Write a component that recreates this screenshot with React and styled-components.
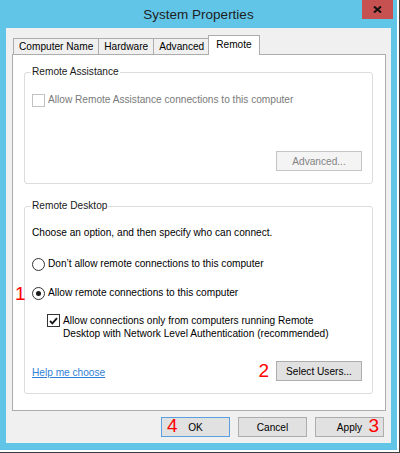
import React from 'react';
import styled, { createGlobalStyle, css } from 'styled-components';

const GlobalStyle = createGlobalStyle`
  html, body {
    margin: 0;
    padding: 0;
    background: #ffffff;
  }
  body {
    font-family: "Liberation Sans", Arial, sans-serif;
    font-size: 10.15px;
    color: #000;
  }
`;

const Desktop = styled.div`
  width: 400px;
  height: 453px;
  box-sizing: border-box;
  border-right: 1px solid #3c3c3c;
  border-bottom: 1px solid #3c3c3c;
  overflow: hidden;
`;

const Window = styled.div`
  width: 397px;
  height: 450px;
  box-sizing: border-box;
  background: #61c5e8;
  padding: 0 6px 7px 6px;
  display: flex;
  flex-direction: column;
`;

const TitleBar = styled.div`
  position: relative;
  height: 28px;
  flex: 0 0 28px;
  display: flex;
  align-items: center;
  justify-content: center;
`;

const Title = styled.span`
  font-size: 13.5px;
  color: #1e1e1e;
`;

const CloseButton = styled.div`
  position: absolute;
  top: 0;
  right: -2px;
  width: 31px;
  height: 19px;
  background: #c75050;
  display: flex;
  align-items: center;
  justify-content: center;
`;

const Client = styled.div`
  flex: 1;
  background: #f0f0f0;
  padding: 7px 5px 0 6px;
  display: flex;
  flex-direction: column;
`;

const TabStrip = styled.div`
  display: flex;
  align-items: flex-end;
  height: 20px;
  margin: 0 0 -1px 1px;
  position: relative;
  z-index: 1;
`;

const Tab = styled.div`
  box-sizing: border-box;
  height: 16px;
  margin: 0 0 1px -1px;
  padding: 0 5px;
  border: 1px solid #adadad;
  border-bottom: none;
  background: #f0f0f0;
  display: flex;
  align-items: center;
  white-space: nowrap;
  &:first-child {
    margin-left: 0;
  }
  ${(p) =>
    p.$active &&
    css`
      height: 20px;
      margin: 0 0 0 -2px;
      padding: 0 7px 2px;
      background: #ffffff;
    `}
`;

const Panel = styled.div`
  flex: 1;
  background: #ffffff;
  border: 1px solid #adadad;
  padding: 11px 12px 0 11px;
  display: flex;
  flex-direction: column;
`;

const Group = styled.fieldset`
  margin: ${(p) => (p.$first ? '0' : '16px 0 0')};
  padding: 0 10px 12px 7px;
  border: 1px solid #dcdcdc;
  border-radius: 3px;
  min-width: 0;
`;

const Legend = styled.legend`
  padding: 0 1px;
  margin-left: -1px;
  line-height: 12px;
  color: #1a1a1a;
`;

const GroupBody = styled.div`
  display: flex;
  flex-direction: column;
  padding-top: 15px;
`;

const Row = styled.div`
  position: relative;
  display: flex;
  align-items: ${(p) => (p.$top ? 'flex-start' : 'center')};
  min-height: 14px;
  margin-top: ${(p) => p.$gap || 0}px;
  margin-left: ${(p) => p.$indent || 0}px;
`;

const Text = styled.span`
  line-height: ${(p) => (p.$multi ? '13px' : '12px')};
  color: ${(p) => (p.$disabled ? '#7a7a7a' : '#000')};
  margin-left: ${(p) => p.$offset || 0}px;
`;

const Box = styled.span`
  box-sizing: border-box;
  width: 13px;
  height: 13px;
  flex: 0 0 13px;
  border: 1px solid ${(p) => (p.$disabled ? '#c2c2c2' : '#333333')};
  background: #ffffff;
  display: flex;
  align-items: center;
  justify-content: center;
`;

const Radio = styled(Box)`
  border-radius: 50%;
  &::after {
    content: '';
    display: ${(p) => (p.$checked ? 'block' : 'none')};
    width: 5px;
    height: 5px;
    border-radius: 50%;
    background: #1a1a1a;
  }
`;

const ActionRow = styled.div`
  display: flex;
  align-items: center;
  justify-content: ${(p) => (p.$spread ? 'space-between' : 'flex-end')};
  margin-top: ${(p) => p.$gap || 0}px;
`;

const Link = styled.a`
  color: #2f7fd6;
  text-decoration: underline;
  margin-top: 2px;
  cursor: pointer;
`;

const Button = styled.div`
  position: relative;
  box-sizing: border-box;
  width: ${(p) => p.$width || 69}px;
  height: 20px;
  background: ${(p) => (p.$disabled ? '#f4f4f4' : '#e1e1e1')};
  border: 1px solid
    ${(p) => (p.$default ? '#5b9fe0' : p.$disabled ? '#c4c4c4' : '#adadad')};
  color: ${(p) => (p.$disabled ? '#838383' : '#000')};
  display: flex;
  align-items: center;
  justify-content: center;
`;

const Footer = styled.div`
  display: flex;
  justify-content: flex-end;
  gap: 8px;
  margin: 6px 0 6px;
  padding-right: 2px;
`;

const Marker = styled.span`
  color: #ff0000;
  font-size: 19px;
  line-height: 20px;
  font-family: "Liberation Sans", Arial, sans-serif;
  ${(p) =>
    p.$float &&
    css`
      position: absolute;
      top: -2px;
    `}
`;

const TrailingGroup = styled.div`
  display: flex;
  align-items: center;
  gap: 7px;
`;

function CheckMark() {
  return (
    <svg width="9" height="8" viewBox="0 0 9 8">
      <path d="M1 4 L3.4 6.4 L8 1.2" fill="none" stroke="#1a1a1a" strokeWidth="1.9" />
    </svg>
  );
}

function CloseGlyph() {
  return (
    <svg width="9" height="7" viewBox="0 0 9 7">
      <path d="M1 0.5 L8 6.5 M8 0.5 L1 6.5" stroke="#111" strokeWidth="2" />
    </svg>
  );
}

export default function App() {
  return (
    <>
      <GlobalStyle />
      <Desktop>
        <Window>
          <TitleBar>
            <Title>System Properties</Title>
            <CloseButton>
              <CloseGlyph />
            </CloseButton>
          </TitleBar>
          <Client>
            <TabStrip>
              <Tab>Computer Name</Tab>
              <Tab>Hardware</Tab>
              <Tab>Advanced</Tab>
              <Tab $active>Remote</Tab>
            </TabStrip>
            <Panel>
              <Group $first>
                <Legend>Remote Assistance</Legend>
                <GroupBody>
                  <Row>
                    <Box $disabled />
                    <Text $disabled $offset={3}>
                      Allow Remote Assistance connections to this computer
                    </Text>
                  </Row>
                  <ActionRow $gap={44}>
                    <Button $disabled $width={86}>Advanced...</Button>
                  </ActionRow>
                </GroupBody>
              </Group>

              <Group>
                <Legend>Remote Desktop</Legend>
                <GroupBody>
                  <Text>Choose an option, and then specify who can connect.</Text>
                  <Row $gap={18}>
                    <Radio />
                    <Text $offset={3}>Don’t allow remote connections to this computer</Text>
                  </Row>
                  <Row $gap={15}>
                    <Marker $float style={{ left: -17 }}>1</Marker>
                    <Radio $checked />
                    <Text $offset={3}>Allow remote connections to this computer</Text>
                  </Row>
                  <Row $gap={14} $indent={15} $top>
                    <Box>
                      <CheckMark />
                    </Box>
                    <Text $multi $offset={3}>
                      Allow connections only from computers running Remote
                      <br />
                      Desktop with Network Level Authentication (recommended)
                    </Text>
                  </Row>
                  <ActionRow $gap={21} $spread>
                    <Link>Help me choose</Link>
                    <TrailingGroup>
                      <Marker>2</Marker>
                      <Button $width={86}>Select Users...</Button>
                    </TrailingGroup>
                  </ActionRow>
                </GroupBody>
              </Group>
            </Panel>
            <Footer>
              <Button $default>
                <Marker $float style={{ left: 5 }}>4</Marker>
                OK
              </Button>
              <Button>Cancel</Button>
              <Button>
                Apply
                <Marker $float style={{ right: 4 }}>3</Marker>
              </Button>
            </Footer>
          </Client>
        </Window>
      </Desktop>
    </>
  );
}
